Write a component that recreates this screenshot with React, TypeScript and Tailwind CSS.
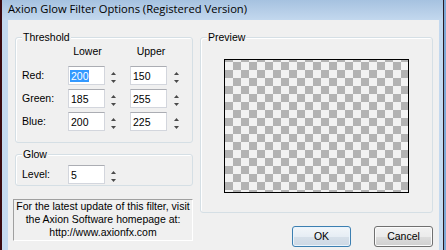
import type { ReactNode } from 'react';

const ui = "font-['Liberation_Sans',Arial,sans-serif] text-[10.5px] text-black";

// little up/down arrows of a Win32 spin control
function Spin() {
  return (
    <svg width="7" height="19" viewBox="0 0 7 19" className="shrink-0">
      <path d="M3.5 6 L6 9 L1 9 Z" fill="#4a4a4a" />
      <path d="M1 14 L6 14 L3.5 17 Z" fill="#4a4a4a" />
    </svg>
  );
}

function NumBox({ value, selected = false }: { value: string; selected?: boolean }) {
  return (
    <div className="w-[37px] h-[19px] shrink-0 flex items-center bg-white border border-[#d3d6dd] border-t-[#abadb3] pl-[1px]">
      {selected ? (
        <span className="bg-[#3399ff] text-white pl-[1px] leading-[12px]">{value}</span>
      ) : (
        <span className="pl-[1px] leading-[12px]">{value}</span>
      )}
    </div>
  );
}

function GroupBox({ title, className, children }: { title: string; className: string; children: ReactNode }) {
  return (
    <div className={`relative border border-[#d5dfe5] rounded-[3px] shadow-[inset_1px_1px_0_#fff] ${className}`}>
      <span className="absolute -top-[7px] left-[6px] px-[1px] bg-[#f0f0f0] leading-[13px]">{title}</span>
      {children}
    </div>
  );
}

function ThresholdRow({ label, lower, upper, selected }: { label: string; lower: string; upper: string; selected?: boolean }) {
  return (
    <div className="flex items-center h-[19px]">
      <span className="w-[46px] shrink-0">{label}</span>
      <NumBox value={lower} selected={selected} />
      <div className="w-[25px] pl-[5px] shrink-0">
        <Spin />
      </div>
      <NumBox value={upper} />
      <div className="pl-[6px]">
        <Spin />
      </div>
    </div>
  );
}

function Button({ label, isDefault = false }: { label: string; isDefault?: boolean }) {
  return (
    <button
      type="button"
      className={
        isDefault
          ? 'w-[59px] h-[21px] rounded-[3px] border border-[#3c7fb1] bg-[linear-gradient(#f2f6fa,#e6edf4_50%,#d6e0ea_50%,#cdd8e4)] shadow-[inset_0_0_0_1px_#eaf4fc] flex items-center justify-center'
          : 'w-[59px] h-[21px] rounded-[3px] border border-[#707070] bg-[linear-gradient(#f2f2f2,#ebebeb_50%,#dddddd_50%,#cfcfcf)] shadow-[inset_0_0_0_1px_#fbfbfb] flex items-center justify-center'
      }
    >
      {label}
    </button>
  );
}

export default function App() {
  return (
    <div className="w-[446px] h-[250px] flex overflow-hidden bg-[#3a0a10]">
      {/* window frame */}
      <div className="ml-[2px] w-[441px] h-full flex flex-col bg-[linear-gradient(#a6c2e0,#c3d8ee_20px,#c6daef)]">
        <div className="h-[20px] shrink-0 pl-[6px] pt-[1px] font-['Open_Sans',Arial,sans-serif] text-[11.2px] leading-[15px] text-black">
          Axion Glow Filter Options (Registered Version)
        </div>

        {/* client area */}
        <div className={`ml-[6px] w-[431px] flex-1 bg-[#f0f0f0] flex ${ui}`}>
          {/* left column */}
          <div className="ml-[5px] w-[180px] flex flex-col">
            <GroupBox title="Threshold" className="ml-[2px] w-[178px] h-[106px] mt-[17px] pl-[6px] pt-[7px]">
              <div className="flex h-[12px] leading-[12px]">
                <span className="w-[46px]" />
                <span className="w-[39px] text-center">Lower</span>
                <span className="w-[24px]" />
                <span className="w-[40px] text-center">Upper</span>
              </div>
              <div className="mt-[9px] flex flex-col gap-[4px]">
                <ThresholdRow label="Red:" lower="200" upper="150" selected />
                <ThresholdRow label="Green:" lower="185" upper="255" />
                <ThresholdRow label="Blue:" lower="200" upper="225" />
              </div>
            </GroupBox>

            <GroupBox title="Glow" className="ml-[2px] w-[178px] h-[32px] mt-[11px] pl-[6px] pt-[10px]">
              <div className="flex items-center h-[19px]">
                <span className="w-[46px] shrink-0">Level:</span>
                <NumBox value="5" />
                <div className="pl-[5px]">
                  <Spin />
                </div>
              </div>
            </GroupBox>

            <div className="mt-[13px] w-[180px] h-[42px] border border-[#a0a0a0] border-r-white border-b-white text-center leading-[13px]">
              <p>For the latest update of this filter, visit</p>
              <p>the Axion Software homepage at:</p>
              <p>http://www.axionfx.com</p>
            </div>
          </div>

          {/* right column */}
          <div className="ml-[7px] w-[233px] flex flex-col">
            <GroupBox title="Preview" className="mt-[17px] w-[233px] h-[176px] pl-[23px] pt-[21px]">
              <div className="w-[185px] h-[134px] border border-black bg-[conic-gradient(#b3b3b3_25%,#f2f2f2_0_50%,#b3b3b3_0_75%,#f2f2f2_0)] bg-[length:16px_16px] bg-[position:0_2px]" />
            </GroupBox>
            <div className="mt-[13px] flex justify-end gap-[23px]">
              <Button label="OK" isDefault />
              <Button label="Cancel" />
            </div>
          </div>
        </div>
      </div>
      <div className="w-[1px] h-full bg-[#2b1a22]" />
      <div className="flex-1 h-full bg-[#7ea9d6]" />
    </div>
  );
}
